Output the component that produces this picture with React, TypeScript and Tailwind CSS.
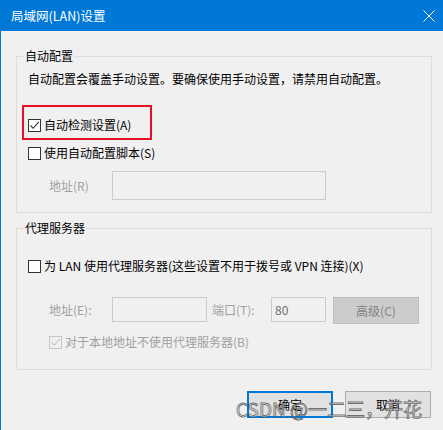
import React from "react";

const font = { fontFamily: '"Noto Sans CJK SC", "Noto Sans", sans-serif' };

function Box({ checked, disabled }: { checked?: boolean; disabled?: boolean }) {
  const border = disabled ? "border-[#c6c6c6] bg-[#f0f0f0]" : "border-[#333333] bg-white";
  const stroke = disabled ? "#c6c6c6" : "#333333";
  return (
    <span className={`flex h-[13px] w-[13px] shrink-0 items-center justify-center border ${border}`}>
      {checked && (
        <svg width="11" height="11" viewBox="0 0 11 11">
          <path d="M1.5 5.5 L4.2 8.3 L9.8 1.8" fill="none" stroke={stroke} strokeWidth="1.1" />
        </svg>
      )}
    </span>
  );
}

function Check({ label, checked, disabled }: { label: string; checked?: boolean; disabled?: boolean }) {
  return (
    <div className="flex h-[16px] items-center gap-[3px]">
      <Box checked={checked} disabled={disabled} />
      <span className={`text-[12px] leading-[16px] ${disabled ? "text-[#a0a0a0]" : "text-black"}`}>{label}</span>
    </div>
  );
}

function Group({ title, className, children }: { title: string; className: string; children: React.ReactNode }) {
  return (
    <div className={`relative ml-[15px] w-[416px] border border-[#dcdcdc] ${className}`}>
      <span className="absolute left-[7px] top-[-9px] bg-[#f0f0f0] px-[1px] text-[12px] leading-[16px] text-black">
        {title}
      </span>
      {children}
    </div>
  );
}

export default function App() {
  return (
    <div
      className="relative h-[430px] w-[443px] overflow-hidden border-l border-[#0078d7] bg-[#f0f0f0]"
      style={font}
    >
      <div className="flex h-[31px] items-center justify-between bg-[#0078d7] pl-[10px] pr-[8px] text-white">
        <span className="text-[12.5px] leading-[16px]">局域网(LAN)设置</span>
        <svg width="12" height="12" viewBox="0 0 12 12">
          <path d="M0.5 0.5 L11.5 11.5 M11.5 0.5 L0.5 11.5" stroke="#ffffff" strokeWidth="1" />
        </svg>
      </div>

      <Group title="自动配置" className="mt-[25px] h-[157px]">
        <p className="mt-[14px] pl-[11px] text-[12px] leading-[16px] text-black">
          自动配置会覆盖手动设置。要确保使用手动设置，请禁用自动配置。
        </p>
        <div className="ml-[5px] mt-[18px] flex h-[35px] w-[130px] items-center border-2 border-[#e81123] pl-[4px] pt-[5px]">
          <Check label="自动检测设置(A)" checked />
        </div>
        <div className="ml-[11px] mt-[5px]">
          <Check label="使用自动配置脚本(S)" />
        </div>
        <div className="ml-[32px] mt-[10px] flex items-center">
          <span className="w-[63px] text-[12px] leading-[16px] text-[#a0a0a0]">地址(R)</span>
          <div className="h-[29px] w-[214px] border border-[#cccccc] bg-[#f0f0f0]" />
        </div>
      </Group>

      <Group title="代理服务器" className="mt-[15px] h-[142px]">
        <div className="ml-[11px] mt-[29px]">
          <Check label="为 LAN 使用代理服务器(这些设置不用于拨号或 VPN 连接)(X)" />
        </div>
        <div className="ml-[32px] mt-[23px] flex items-start">
          <span className="flex h-[25px] w-[63px] items-center text-[12px] text-[#a0a0a0]">地址(E):</span>
          <div className="h-[25px] w-[95px] border border-[#cccccc] bg-[#f0f0f0]" />
          <span className="ml-[5px] flex h-[25px] w-[59px] items-center text-[12px] text-[#a0a0a0]">端口(T):</span>
          <div className="flex h-[25px] w-[55px] items-center border border-[#cccccc] bg-[#f0f0f0] pl-[3px] text-[12px] text-[#6d6d6d]">
            80
          </div>
          <div className="ml-[7px] flex h-[27px] w-[86px] items-center justify-center border border-[#bfbfbf] bg-[#cccccc] text-[12px] text-[#838383]">
            高级(C)
          </div>
        </div>
        <div className="ml-[32px] mt-[10px]">
          <Check label="对于本地地址不使用代理服务器(B)" checked disabled />
        </div>
      </Group>

      <div className="mt-[21px] flex justify-end gap-[12px] pr-[12px]">
        <div className="flex h-[27px] w-[86px] items-center justify-center border-2 border-[#0078d7] bg-[#e1e1e1] text-[12px] text-black">
          确定
        </div>
        <div className="flex h-[27px] w-[86px] items-center justify-center border border-[#adadad] bg-[#e1e1e1] text-[12px] text-black">
          取消
        </div>
      </div>

      <span className="pointer-events-none absolute left-[235px] top-[396px] whitespace-nowrap text-[19px] leading-[26px] text-white/60 [-webkit-text-stroke:0.9px_rgba(70,70,70,0.75)]">
        CSDN @一二三，开花
      </span>
    </div>
  );
}
